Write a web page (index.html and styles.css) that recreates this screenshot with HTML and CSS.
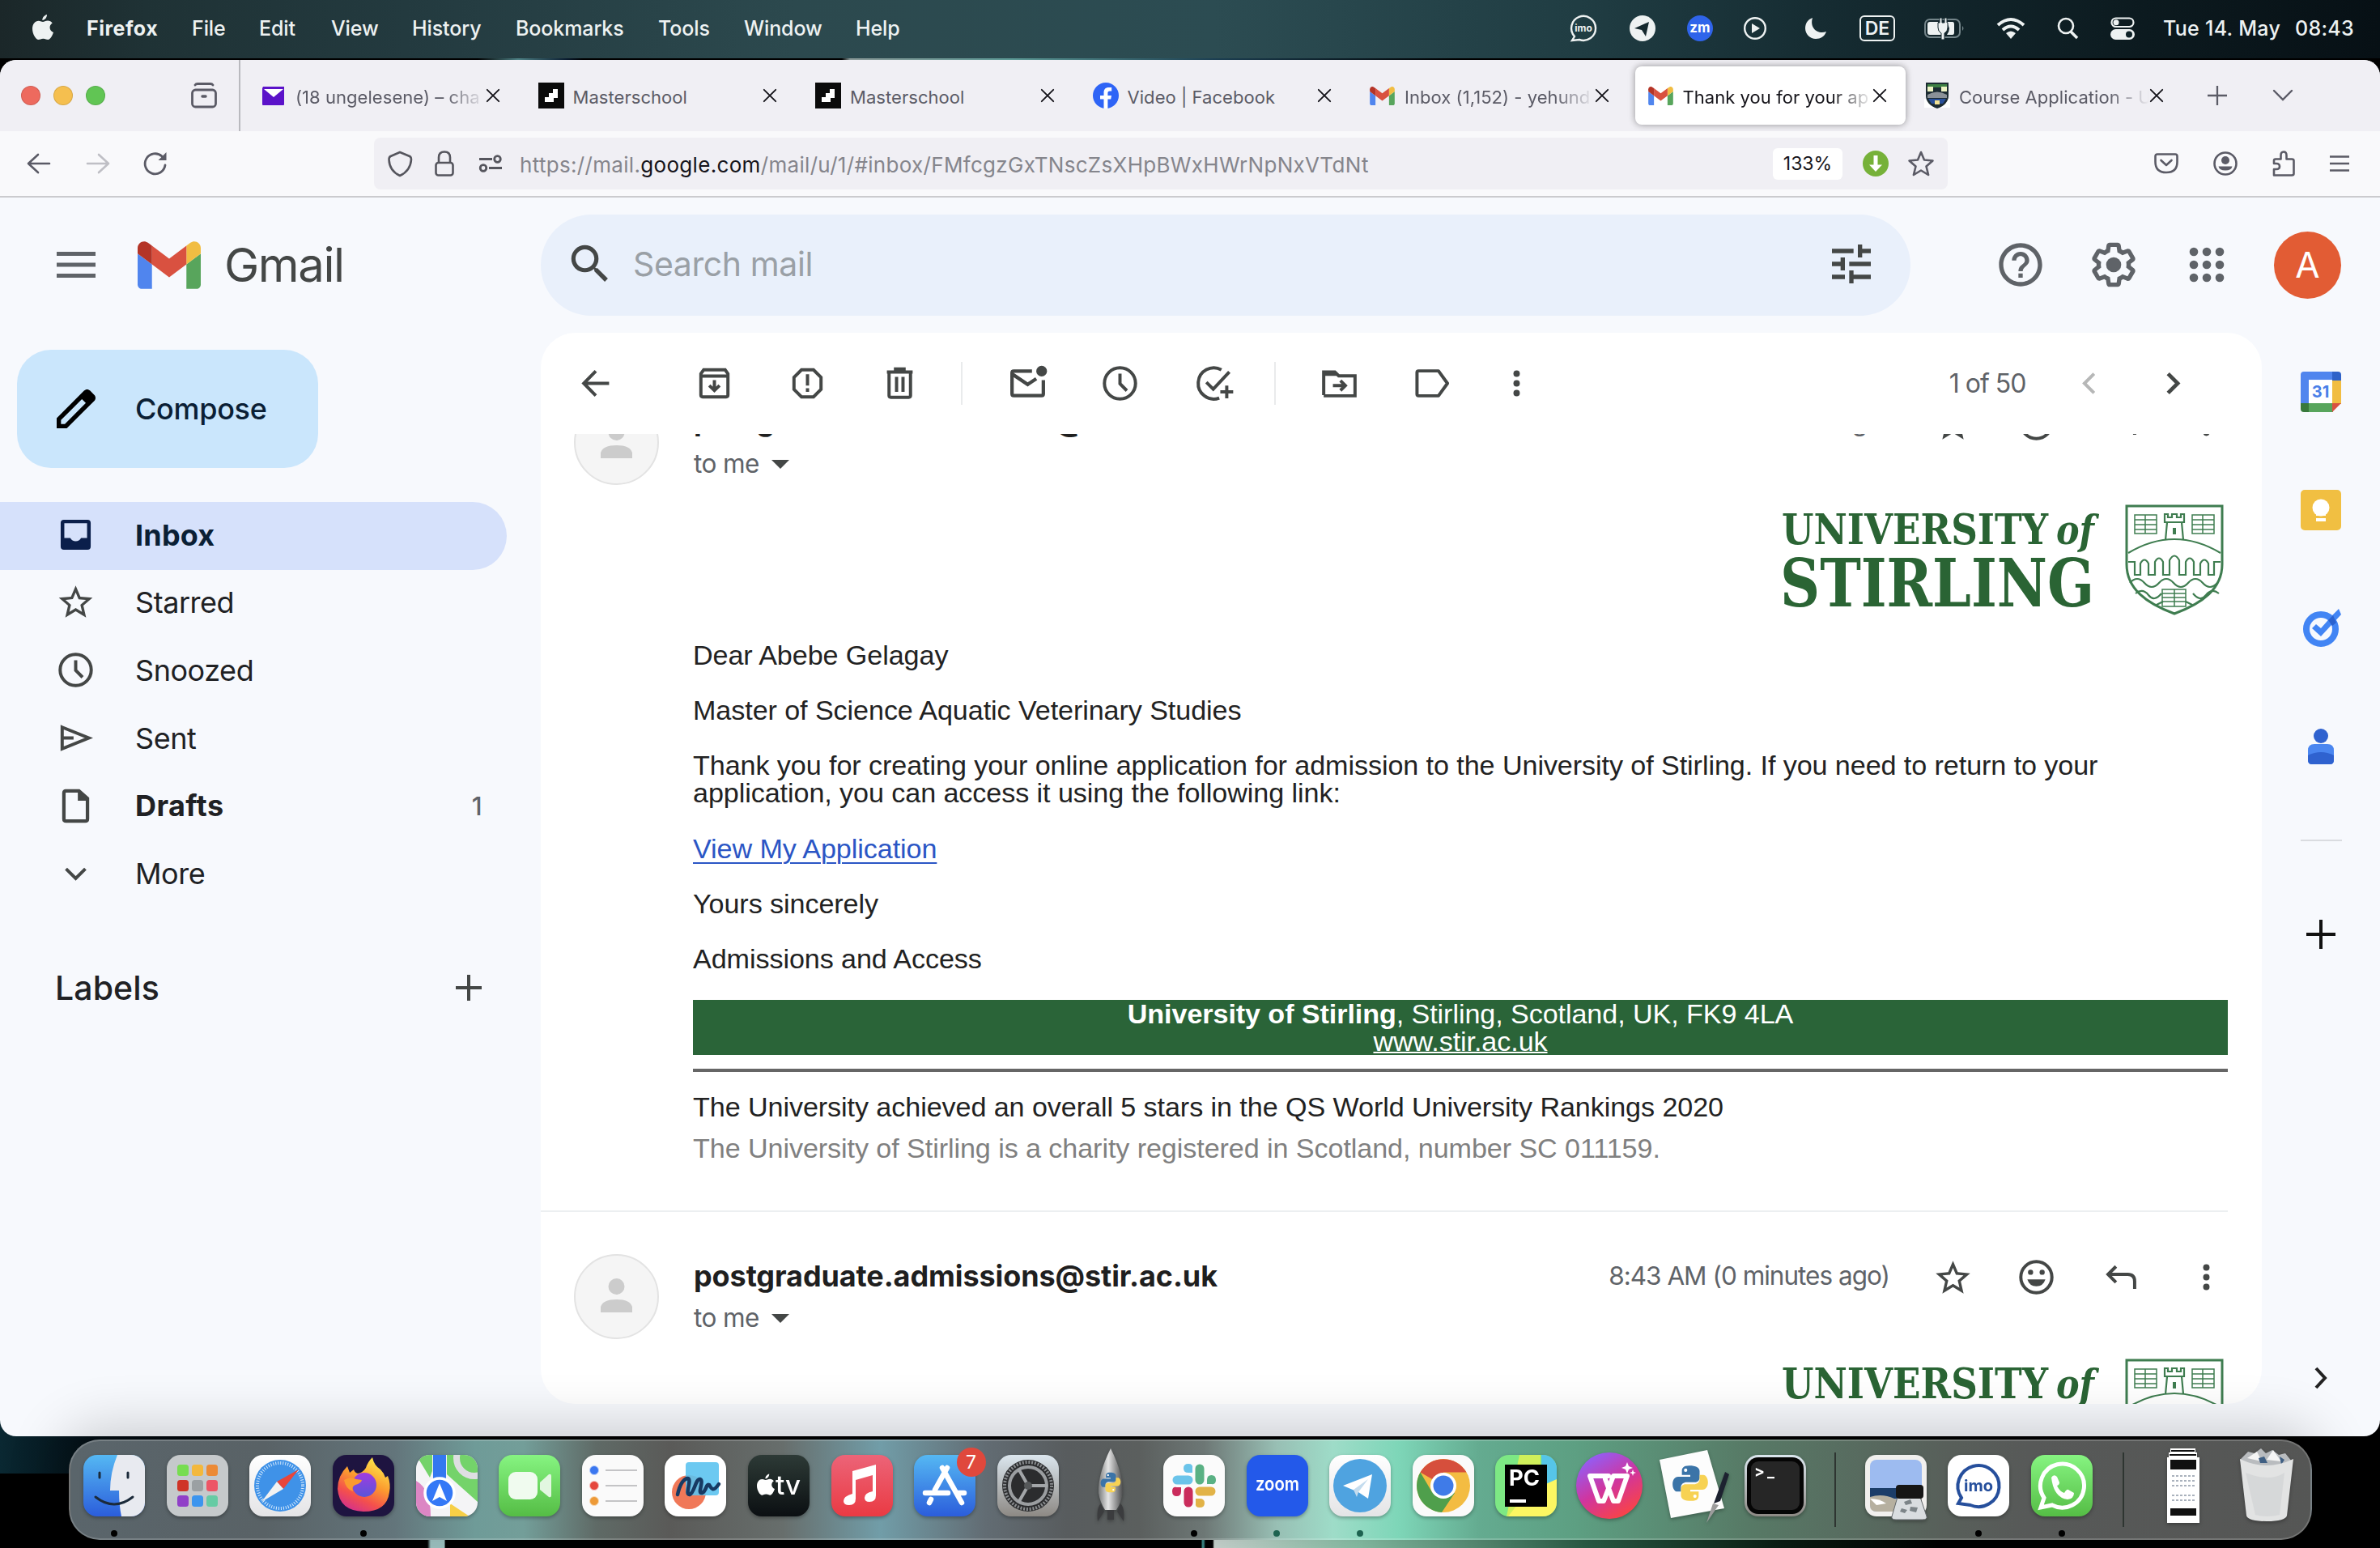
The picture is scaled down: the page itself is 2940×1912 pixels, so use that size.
FILE: index.html
```html
<!DOCTYPE html>
<html lang="en">
<head>
<meta charset="utf-8">
<title>Thank you for your application - Gmail</title>
<link rel="stylesheet" href="styles.css">
</head>
<body>
<svg class="defs" width="0" height="0">
  <defs>
    <symbol id="gmail" viewBox="52 42 88 66"><path fill="#5085ee" d="M58 108h14V74L52 59v43c0 3.32 2.69 6 6 6"/><path fill="#58a55c" d="M120 108h14c3.32 0 6-2.69 6-6V59l-20 15"/><path fill="#f1bd42" d="M120 48v26l20-15v-8c0-7.42-8.47-11.65-14.4-7.2"/><path fill="#d95140" d="M72 74V48l24 18 24-18v26L96 92"/><path fill="#b43427" d="M52 51v8l20 15V48l-5.6-4.2c-5.94-4.45-14.4-.22-14.4 7.2"/></symbol>
    <symbol id="star" viewBox="0 0 24 24"><path fill="currentColor" d="M22 9.24l-7.19-.62L12 2 9.19 8.63 2 9.24l5.46 4.73L5.82 21 12 17.27 18.18 21l-1.63-7.03L22 9.24zM12 15.4l-3.76 2.27 1-4.28-3.32-2.88 4.38-.38L12 6.1l1.71 4.04 4.38.38-3.32 2.88 1 4.28L12 15.4z"/></symbol>
    <symbol id="clock" viewBox="0 0 20 20"><g fill="none" stroke="currentColor" stroke-width="1.5"><circle cx="10" cy="10" r="7.25"/><path d="M10 5.5v4.7l3.2 3.2"/></g></symbol>
    <symbol id="dots" viewBox="0 0 20 20"><g fill="currentColor"><circle cx="10" cy="5.5" r="1.5"/><circle cx="10" cy="10" r="1.5"/><circle cx="10" cy="14.5" r="1.5"/></g></symbol>
    <symbol id="close" viewBox="0 0 20 20"><path fill="none" stroke="#15141a" stroke-width="2.1" stroke-linecap="round" d="M2 2l16 16M18 2L2 18"/></symbol>
    <symbol id="school" viewBox="0 0 32 32"><path fill="#0b0b0b" d="M0 0h32v32H0z"/><path fill="#fff" d="M18 8h6v11h-5v5H8v-6h5v-5h5z"/></symbol>
    <symbol id="apple" viewBox="0 0 26 32"><path fill="currentColor" d="M18 0c.2 3-2.400 7-5.600 7C12 3.800 15 .6 18 0zM13 9c1.600 0 3-1.500 6-1.500 2.300 0 4.400 1.200 5.700 3-4.700 2.700-4 9.600 1.300 11.500-1 3-3.800 9-6.700 9-2.300 0-3-1.300-5.900-1.300S9.600 31 7.600 31C4 31 0 23.500 0 17.500 0 11.500 3.600 7.700 7.600 7.700c2.400 0 4.100 1.300 5.400 1.300z"/></symbol>
    <symbol id="stirling" viewBox="0 0 560 150">
      <g fill="#2a6434">
        <text class="serif" x="1" y="52" font-size="52" textLength="329" lengthAdjust="spacingAndGlyphs">UNIVERSITY</text>
        <text class="serif" x="340" y="52" font-size="50" font-style="italic" textLength="47" lengthAdjust="spacingAndGlyphs">of</text>
        <text class="serif" x="-1" y="129" font-size="82" textLength="388" lengthAdjust="spacingAndGlyphs">STIRLING</text>
      </g>
      <g fill="none" stroke="#3f7d50" stroke-width="2.200">
        <path stroke-width="3" d="M427 5h118v72c0 30-24 48-59 61-35-13-59-31-59-61z"/>
        <path d="M429 63q57-34 114 0M475 47l2-22h-3V15h4v4h5v-4h6v4h5v-4h4v10h-3l2 22M474 25h24"/>
        <path d="M429 74h8v16h7V76q5-9 10 0v14h8V74q5-9 10 0v16h8V72q6-11 12 0v18h8V74q5-9 10 0v16h8V76q5-9 10 0v14h7V74h8"/>
        <path d="M431 100q9-10 18 0t18 0 18 0 18 0 18 0 18 0M438 113q9-7 16 2t16-2M541 113q-9-7-16 2t-16-2M462 128l10-5M510 128l-10-5"/>
        <g stroke-width="1.500"><path d="M437 16h27v23h-27zM450 16v23M437 22h27M437 28h27M437 34h27M508 16h27v23h-27zM521 16v23M508 22h27M508 28h27M508 34h27M471 108h29v21h-29zM486 108v21M471 113h29M471 118h29M471 123h29"/></g>
        <path stroke-width="4" d="M486 32v8"/>
      </g>
    </symbol>
    <symbol id="python" viewBox="0 0 40 40"><path fill="#3b74a8" d="M19 1c-7 0-8 3-8 6v4h9v2H7c-4 0-6 4-6 8s2 8 5 8h4v-5c0-3 3-5 6-5h9c3 0 5-2 5-5V7c0-4-4-6-11-6z"/><path fill="#f7d253" d="M21 39c7 0 8-3 8-6v-4h-9v-2h13c4 0 6-4 6-8s-2-8-5-8h-4v5c0 3-3 5-6 5h-9c-3 0-5 2-5 5v7c0 4 4 6 11 6z"/><circle cx="15" cy="6" r="1.800" fill="#fff"/><circle cx="25" cy="34" r="1.800" fill="#fff"/></symbol>
    <linearGradient id="blueV" x2="0" y2="1"><stop stop-color="#55b8f3"/><stop offset="1" stop-color="#2b5ddb"/></linearGradient>
    <linearGradient id="greenV" x2="0" y2="1"><stop stop-color="#86f481"/><stop offset="1" stop-color="#55bd45"/></linearGradient>
    <linearGradient id="redV" x2="0" y2="1"><stop stop-color="#ec6478"/><stop offset="1" stop-color="#ea3a43"/></linearGradient>
    <linearGradient id="greyV" x2="0" y2="1"><stop stop-color="#dbe6ee"/><stop offset="1" stop-color="#8d8984"/></linearGradient>
    <linearGradient id="darkV" x2="0" y2="1"><stop stop-color="#2d3a36"/><stop offset="1" stop-color="#0b0f12"/></linearGradient>
    <linearGradient id="whiteV" x2="0" y2="1"><stop stop-color="#fff"/><stop offset="1" stop-color="#e4e4e6"/></linearGradient>
    <linearGradient id="fireV" x1=".8" x2=".3" y2="1"><stop stop-color="#fff04d"/><stop offset=".45" stop-color="#fb9a2f"/><stop offset=".75" stop-color="#f4504c"/><stop offset="1" stop-color="#d5318a"/></linearGradient>
    <linearGradient id="violet" x2="0" y2="1"><stop stop-color="#a03be0"/><stop offset="1" stop-color="#5a55d8"/></linearGradient>
    <linearGradient id="wps" x1=".2" x2=".8" y2="1"><stop stop-color="#8b62ff"/><stop offset=".5" stop-color="#d0359f"/><stop offset="1" stop-color="#ff453a"/></linearGradient>
    <linearGradient id="metal"><stop stop-color="#77797a"/><stop offset=".4" stop-color="#e5e5e5"/><stop offset="1" stop-color="#4b4c4d"/></linearGradient>
    <clipPath id="tile"><rect width="76" height="76" rx="17"/></clipPath>
  </defs>
</svg>

<header class="menubar">
  <nav class="menus">
    <svg class="apple" width="26" height="32"><use href="#apple"/></svg>
    <b>Firefox</b><span>File</span><span>Edit</span><span>View</span><span>History</span><span>Bookmarks</span><span>Tools</span><span>Window</span><span>Help</span>
  </nav>
  <div class="status">
    <svg width="34" height="34" viewBox="0 0 34 34"><path d="M6 27a15 15 0 1 1 6 4l-9 1z" fill="none" stroke="currentColor" stroke-width="2.400"/><text x="17" y="21" font-size="12" font-weight="bold" text-anchor="middle" fill="currentColor">imo</text></svg>
    <svg width="32" height="32" viewBox="0 0 32 32"><circle cx="16" cy="16" r="16" fill="currentColor"/><path fill="#15292e" d="M6 16l18-8-4 18-5-8z"/></svg>
    <svg width="32" height="32" viewBox="0 0 32 32"><circle cx="16" cy="16" r="16" fill="#2f64ea"/><text x="16" y="21" font-size="17" font-weight="bold" text-anchor="middle" fill="#fff">zm</text></svg>
    <svg width="30" height="30" viewBox="0 0 30 30"><circle cx="15" cy="15" r="12.800" fill="none" stroke="currentColor" stroke-width="2.400"/><path fill="currentColor" d="M11 9l10 6-10 6z"/></svg>
    <svg width="28" height="28" viewBox="0 0 28 28"><path fill="currentColor" d="M10 1C4 3 1 8 1 14c0 7 6 13 13 13 6 0 11-3 13-9C17 22 6 14 10 1z"/></svg>
    <span class="lang">DE</span>
    <svg width="50" height="28" viewBox="0 0 50 28"><rect x="1" y="3" width="43" height="22" rx="6" fill="none" stroke="#74858a" stroke-width="2"/><path d="M47 11q3 3 0 6z" fill="#74858a"/><path fill="currentColor" d="M7 6h10v7q0 5 4 7v2H7q-3 0-3-3V9q0-3 3-3zM28 6h7q2 0 2 3v10q0 3-2 3h-7q3-4 3-8z"/><path fill="currentColor" stroke="#15292e" d="M19 7V1h3v6h3V1h3v6h1v6q0 5-4 7v8h-4v-8q-4-2-4-7V7z"/></svg>
    <svg width="36" height="28" viewBox="0 0 36 28"><g fill="none" stroke="currentColor" stroke-width="4"><path d="M2 10q16-14 32 0M8 16q10-9 20 0"/></g><path fill="currentColor" d="M12 20q6-5 12 0l-6 7z"/></svg>
    <svg width="28" height="28" viewBox="0 0 28 28"><g fill="none" stroke="currentColor" stroke-width="2.600"><circle cx="12" cy="11" r="9"/><path d="M18 18l8 8" stroke-width="3.500"/></g></svg>
    <svg width="30" height="28" viewBox="0 0 30 28"><rect x="1.500" y="1.500" width="27" height="10.500" rx="5.200" fill="none" stroke="currentColor" stroke-width="2.200"/><circle cx="7" cy="6.800" r="3.500" fill="currentColor"/><rect y="15" width="30" height="13" rx="6.500" fill="currentColor"/><circle cx="23" cy="21.500" r="4" fill="#0f2227"/></svg>
    <span class="date">Tue 14. May</span><span class="time">08:43</span>
  </div>
</header>

<main class="window">
  <div class="tabstrip">
    <div class="lights"><i class="red"></i><i class="amber"></i><i class="green"></i></div>
    <svg class="view" width="32" height="32" viewBox="0 0 32 32"><g fill="none" stroke="#5b5b66" stroke-width="2.800" stroke-linecap="round"><rect x="1.500" y="9" width="29" height="21" rx="4"/><path d="M5 3q1-1.500 3-1.500h16q2 0 3 1.500"/><path d="M14 17h4" stroke-width="3.500"/></g></svg>
    <div class="tabs">
      <div class="tab"><svg width="32" height="32" viewBox="0 0 32 32"><path fill="#5b12c9" d="M3 5h26v22q0 1-1 1H3q-1 0-1-1V7z"/><path fill="#fff" d="M4 8h24L16 18z"/></svg><span class="fade">(18 ungelesene) – cha</span><svg class="x" width="20" height="20"><use href="#close"/></svg></div>
      <div class="tab"><svg width="32" height="32"><use href="#school"/></svg><span>Masterschool</span><svg class="x" width="20" height="20"><use href="#close"/></svg></div>
      <div class="tab"><svg width="32" height="32"><use href="#school"/></svg><span>Masterschool</span><svg class="x" width="20" height="20"><use href="#close"/></svg></div>
      <div class="tab"><svg width="32" height="32" viewBox="0 0 32 32"><circle cx="16" cy="16" r="16" fill="#2e64f6"/><path fill="#fff" d="M13.500 32V20.500H9V16h4.500v-3.500C13.500 8 16 6 19.500 6h3.700v4.500H21c-2 0-2.600 1-2.600 2.500v3H23l-.8 4.500h-3.800V32z"/></svg><span>Video | Facebook</span><svg class="x" width="20" height="20"><use href="#close"/></svg></div>
      <div class="tab"><svg width="31" height="23"><use href="#gmail"/></svg><span class="fade">Inbox (1,152) - yehund</span><svg class="x" width="20" height="20"><use href="#close"/></svg></div>
      <div class="tab active"><svg width="31" height="23"><use href="#gmail"/></svg><span class="fade">Thank you for your ap</span><svg class="x" width="20" height="20"><use href="#close"/></svg></div>
      <div class="tab"><svg width="32" height="32" viewBox="0 0 32 32"><path fill="#fff" d="M0 20h32v11H0z"/><path fill="#1d2c33" d="M2 0h28v16q0 11-14 16Q2 27 2 16z"/><path fill="#3d7f43" d="M4 2h24v4H4z"/><path fill="#eef3c4" d="M4 5h7v6H4zM21 5h7v6h-7z"/><path fill="#8b9198" d="M4 15q12-7 24 0v4H4z"/><path fill="#284f9a" d="M5 20h22l-4 6H9z"/><path fill="#f2e294" d="M13 22h6v5h-6z"/></svg><span class="fade">Course Application - U</span><svg class="x" width="20" height="20"><use href="#close"/></svg></div>
    </div>
    <svg class="newtab" width="26" height="26" viewBox="0 0 26 26"><path stroke="#5b5b66" stroke-width="2.300" d="M13 1v24M1 13h24"/></svg>
    <svg class="alltabs" width="26" height="16" viewBox="0 0 26 16"><path fill="none" stroke="#5b5b66" stroke-width="2.400" stroke-linecap="round" d="M2 2l11 11L24 2"/></svg>
  </div>

  <div class="navbar">
    <svg width="30" height="26" viewBox="0 0 30 26"><path fill="none" stroke="#5b5b66" stroke-width="2.600" stroke-linecap="round" stroke-linejoin="round" d="M14 2L2 13l12 11M2 13h26"/></svg>
    <svg width="30" height="26" viewBox="0 0 30 26"><path fill="none" stroke="#bfbfc5" stroke-width="2.600" stroke-linecap="round" stroke-linejoin="round" d="M16 2l12 11-12 11M28 13H2"/></svg>
    <svg width="30" height="30" viewBox="0 0 30 30"><path fill="none" stroke="#5b5b66" stroke-width="2.800" stroke-linecap="round" d="M27 17a12.500 12.500 0 1 1-4-11l3 3"/><path fill="#5b5b66" d="M28.500 1v10h-10z"/></svg>
    <div class="urlbar">
      <svg width="30" height="32" viewBox="0 0 30 32"><path fill="none" stroke="#55555d" stroke-width="2.600" stroke-linejoin="round" d="M15 2l12 5q2 1 2 4-1 14-14 20Q2 25 1.500 11q0-3 2-4z"/></svg>
      <svg width="24" height="32" viewBox="0 0 24 32"><g fill="none" stroke="#55555d" stroke-width="2.600"><rect x="1.500" y="15" width="21" height="15.500" rx="3"/><path d="M5 15V8.500q0-7 7-7t7 7V15"/></g></svg>
      <svg width="28" height="22" viewBox="0 0 28 22"><g fill="none" stroke="#55555d" stroke-width="2.800"><path d="M0 5.500h16M12 16.500h16"/><circle cx="22.500" cy="5.500" r="3.800"/><circle cx="5" cy="16.500" r="3.800"/></g></svg>
      <span class="url">https://mail.<em>google.com</em>/mail/u/1/#inbox/FMfcgzGxTNscZsXHpBWxHWrNpNxVTdNt</span>
      <span class="zoom">133%</span>
      <svg width="32" height="32" viewBox="0 0 32 32"><circle cx="16" cy="16" r="16" fill="#76b139"/><path fill="#fff" d="M13.500 6h5v11.500H24L16 26l-8-8.500h5.500z"/></svg>
      <svg width="32" height="32" viewBox="0 0 32 32"><path fill="none" stroke="#5b5b66" stroke-width="2.600" stroke-linejoin="round" d="M16 2l4 9.500 10.500 1-8 7 2.600 10.500L16 24.500 6.900 30l2.600-10.500-8-7 10.500-1z"/></svg>
    </div>
    <svg class="pocket" width="30" height="26" viewBox="0 0 30 26"><g fill="none" stroke="#5b5b66" stroke-width="2.600" stroke-linecap="round" stroke-linejoin="round"><path d="M4 1.500h22q2.500 0 2.500 2.500v7q0 13-13.500 13T1.500 11V4Q1.500 1.500 4 1.500z"/><path d="M8.500 9l6.500 6 6.500-6"/></g></svg>
    <svg width="30" height="30" viewBox="0 0 30 30"><circle cx="15" cy="15" r="13.500" fill="none" stroke="#5b5b66" stroke-width="2.600"/><circle cx="15" cy="11" r="5" fill="#5b5b66"/><path fill="#5b5b66" d="M6.500 18.500h17q-1 5-8.500 5t-8.500-5z"/></svg>
    <svg width="28" height="32" viewBox="0 0 28 32"><path fill="none" stroke="#5b5b66" stroke-width="2.600" stroke-linejoin="round" d="M2 30.500V23h3q4 0 4-3.500T5 16H2v-3.500q0-2 2-2h6.500V6q0-4.500 3.500-4.500T17.500 6v4.500H24q2.500 0 2.500 2v16q0 2-2.500 2z"/></svg>
    <svg width="24" height="20" viewBox="0 0 24 20"><path stroke="#5b5b66" stroke-width="2.600" d="M0 1.500h24M0 10h24M0 18.500h24"/></svg>
  </div>

  <div class="gmail">
    <div class="topbar">
      <svg class="burger" width="48" height="32" viewBox="0 0 48 32"><path stroke="#5f6368" stroke-width="5" d="M0 2.500h48M0 16h48M0 29.500h48"/></svg>
      <svg class="mark" width="78" height="59"><use href="#gmail"/></svg>
      <span class="brand">Gmail</span>
      <div class="search">
        <svg width="62" height="62" viewBox="0 0 24 24"><path fill="#444746" d="M15.500 14h-.79l-.28-.27A6.471 6.471 0 0 0 16 9.500 6.500 6.500 0 1 0 9.500 16c1.610 0 3.090-.59 4.230-1.570l.27.28v.79l5 4.990L20.490 19l-4.990-5zm-6 0C7.010 14 5 11.990 5 9.500S7.010 5 9.500 5 14 7.010 14 9.500 11.990 14 9.500 14z"/></svg>
        <span>Search mail</span>
        <svg width="48" height="48" viewBox="0 0 18 18"><path fill="#444746" d="M0 14v2h6v-2H0zM0 2v2h10V2H0zm10 16v-2h8v-2h-8v-2H8v6h2zM4 6v2H0v2h4v2h2V6H4zm14 4V8H8v2h10zm-6-4h2V4h4V2h-4V0h-2v6z"/></svg>
      </div>
      <div class="account">
        <svg width="64" height="64" viewBox="0 0 24 24"><path fill="#5f6368" d="M11 18h2v-2h-2v2zm1-16C6.480 2 2 6.480 2 12s4.480 10 10 10 10-4.480 10-10S17.520 2 12 2zm0 18c-4.410 0-8-3.590-8-8s3.590-8 8-8 8 3.590 8 8-3.590 8-8 8zm0-14c-2.210 0-4 1.790-4 4h2c0-1.100.9-2 2-2s2 .9 2 2c0 2-3 1.750-3 5h2c0-2.250 3-2.500 3-5 0-2.210-1.790-4-4-4z"/></svg>
        <svg width="64" height="64" viewBox="0 0 24 24"><path fill="#5f6368" d="M13.850 22.250h-3.700c-.74 0-1.360-.54-1.450-1.270l-.27-1.890c-.27-.14-.53-.29-.79-.46l-1.800.72c-.7.26-1.470-.03-1.810-.65L2.200 15.530c-.35-.66-.2-1.440.36-1.880l1.530-1.190c-.01-.15-.02-.3-.02-.46 0-.15.010-.31.020-.46l-1.520-1.190c-.59-.45-.74-1.260-.37-1.880l1.850-3.190c.34-.62 1.110-.9 1.790-.63l1.810.73c.26-.17.52-.32.78-.46l.27-1.910c.09-.7.71-1.250 1.440-1.250h3.700c.74 0 1.360.54 1.450 1.270l.27 1.890c.27.14.53.29.79.46l1.800-.72c.71-.26 1.480.03 1.820.65l1.840 3.180c.36.66.2 1.440-.36 1.880l-1.520 1.190c.01.15.02.3.02.46s-.01.31-.02.46l1.520 1.190c.56.45.72 1.230.37 1.860l-1.860 3.220c-.34.62-1.110.9-1.800.63l-1.800-.72c-.26.17-.52.32-.78.46l-.27 1.910c-.1.68-.72 1.220-1.460 1.220zm-3.230-2h2.760l.37-2.550.53-.22c.44-.18.88-.44 1.340-.78l.45-.34 2.380.96 1.380-2.400-2.030-1.580.07-.56c.03-.26.06-.51.06-.78s-.03-.53-.06-.78l-.07-.56 2.030-1.580-1.390-2.400-2.390.96-.45-.35c-.42-.32-.87-.58-1.330-.77l-.52-.22-.37-2.550h-2.760l-.37 2.550-.53.21c-.44.19-.88.44-1.340.79l-.45.33-2.380-.95-1.390 2.390 2.030 1.580-.07.56a7 7 0 0 0-.06.79c0 .26.02.53.06.78l.07.56-2.030 1.580 1.380 2.400 2.390-.96.45.35c.43.33.86.58 1.330.77l.53.22z"/><circle cx="12" cy="12" r="3.500" fill="#5f6368"/></svg>
        <svg width="64" height="64" viewBox="0 0 24 24"><g fill="#5f6368"><circle cx="6" cy="6" r="2"/><circle cx="12" cy="6" r="2"/><circle cx="18" cy="6" r="2"/><circle cx="6" cy="12" r="2"/><circle cx="12" cy="12" r="2"/><circle cx="18" cy="12" r="2"/><circle cx="6" cy="18" r="2"/><circle cx="12" cy="18" r="2"/><circle cx="18" cy="18" r="2"/></g></svg>
        <span class="me">A</span>
      </div>
    </div>

    <div class="columns">
      <aside class="sidebar">
        <button class="compose"><svg width="48" height="48" viewBox="0 0 18 18"><path fill="#000" d="M14.100 0c-.5 0-1 .2-1.400.6L0 13.300V18h4.700L17.400 5.300c.8-.8.8-2 0-2.800L15.500.6c-.4-.4-.9-.6-1.400-.6zM11.700 4.500l1.800 1.800L3.800 16H2v-1.800z"/></svg><span>Compose</span></button>
        <ul class="folders">
          <li class="on"><svg width="53" height="53" viewBox="0 0 20 20"><path fill="#0b1f4b" fill-rule="evenodd" d="M4.500 3h11q1.500 0 1.500 1.500v11q0 1.500-1.500 1.500h-11Q3 17 3 15.500v-11Q3 3 4.500 3zm.2 1.600v6.900h2.800q.8 1.500 2.500 1.500t2.500-1.500h2.800V4.600z"/></svg><span>Inbox</span></li>
          <li><svg width="50" height="50"><use href="#star"/></svg><span>Starred</span></li>
          <li><svg width="53" height="53"><use href="#clock"/></svg><span>Snoozed</span></li>
          <li><svg width="53" height="53" viewBox="0 0 20 20"><path fill="none" stroke="currentColor" stroke-width="1.500" d="M3.700 5l12.400 5-12.400 5zM4 10h5"/></svg><span>Sent</span></li>
          <li class="bold"><svg width="53" height="53" viewBox="0 0 20 20"><path fill="none" stroke="currentColor" stroke-width="1.600" d="M5 3h6.500L15.500 6.500V16q0 1-1 1H5.500q-1 0-1-1V4q0-1 1-1z"/><path fill="currentColor" d="M11 3v4.500h5z"/></svg><span>Drafts</span><small>1</small></li>
          <li><svg width="53" height="53" viewBox="0 0 20 20"><path fill="none" stroke="currentColor" stroke-width="1.500" d="M5.500 8l4.500 4.400L14.500 8"/></svg><span>More</span></li>
        </ul>
        <div class="labels"><span>Labels</span><svg width="32" height="32" viewBox="0 0 32 32"><path stroke="#444746" stroke-width="4" d="M16 0v32M0 16h32"/></svg></div>
      </aside>

      <section class="card">
        <div class="toolbar">
          <svg viewBox="0 0 20 20"><path fill="none" stroke="currentColor" stroke-width="1.500" d="M9.800 4.300L4.200 10l5.600 5.700M4.500 10H16"/></svg>
          <svg viewBox="0 0 20 20"><g fill="none" stroke="currentColor" stroke-width="1.500"><path d="M3.700 6v9.500q0 .8.8.8h11q.8 0 .8-.8V5.500L15 3.700H5L3.700 5.500zM3.700 6.600h12.600M10 8.500V13M7.600 11l2.400 2.300 2.400-2.300"/></g></svg>
          <svg viewBox="0 0 20 20"><path fill="none" stroke="currentColor" stroke-width="1.500" d="M7.200 3.700h5.600l3.500 3.500v5.600l-3.500 3.500H7.200l-3.500-3.500V7.200zM10 5.800v5.200M10 12.300v1.700"/></svg>
          <svg viewBox="0 0 20 20"><g fill="none" stroke="currentColor" stroke-width="1.500"><path d="M5 5v10.700q0 .8.8.8h8.400q.8 0 .8-.8V5M4 4.700h12M8 4V3.300h4V4M8.500 7v7M11.500 7v7"/></g></svg>
          <i></i>
          <svg viewBox="0 0 20 20"><g fill="none" stroke="currentColor" stroke-width="1.600"><path d="M12 4.300H3.500q-.8 0-.8.8v9.800q0 .8.800.8h13q.8 0 .8-.8V8.500M3 5.800l7 4.700 4-2.700"/></g><circle cx="16.500" cy="4.300" r="2.500" fill="currentColor"/></svg>
          <svg><use href="#clock"/></svg>
          <svg viewBox="0 0 20 20"><g fill="none" stroke="currentColor" stroke-width="1.500"><path d="M13.500 3.700A7.250 7.250 0 1 0 12.500 16.800M6.500 9.500l3.200 3.200 7.500-8M16 11v6M13 14h6"/></g></svg>
          <i></i>
          <svg viewBox="0 0 20 20"><path fill="none" stroke="currentColor" stroke-width="1.500" d="M2.700 15.500V4.700h5.200l1.800 1.800h7.600v9.300H2.700M7 11h5.500M10.500 8.700L12.800 11l-2.300 2.300"/><path fill="currentColor" d="M2.700 4.500h5l2 2h-7z"/></svg>
          <svg viewBox="0 0 20 20"><path fill="none" stroke="currentColor" stroke-width="1.500" stroke-linejoin="round" d="M3.500 4.200h9.300l4.200 5.800-4.200 5.800H3.500q-.7 0-.7-.7V4.900q0-.7.7-.7z"/></svg>
          <svg><use href="#dots"/></svg>
          <span class="pos">1 of 50</span>
          <svg class="dim" viewBox="0 0 20 20"><path fill="none" stroke="currentColor" stroke-width="1.500" d="M12 5.500L7.500 10l4.500 4.500"/></svg>
          <svg viewBox="0 0 20 20"><path fill="none" stroke="currentColor" stroke-width="1.800" d="M8 5.500l4.500 4.500L8 14.500"/></svg>
        </div>
        <div class="thread">
          <article class="message first">
            <div class="meta">
              <svg class="avatar" width="105" height="105" viewBox="0 0 105 105"><circle cx="52.500" cy="52.500" r="51.500" fill="#f5f5f5" stroke="#e3e3e3" stroke-width="2"/><circle cx="52.500" cy="40" r="10" fill="#ccc"/><path fill="#ccc" d="M33 72v-7q3-9 19.500-9T72 65v7z"/></svg>
              <div class="who"><b>postgraduate.admissions@stir.ac.uk</b><span>to me <i></i></span></div>
              <span class="when">8:43 AM (0 minutes ago)</span>
              <div class="acts"><svg width="51" height="51"><use href="#star"/></svg><svg width="53" height="53" viewBox="0 0 20 20"><circle cx="10" cy="10" r="7.250" fill="none" stroke="currentColor" stroke-width="1.500"/><circle cx="7.300" cy="7.700" r="1.200" fill="currentColor"/><circle cx="12.700" cy="7.700" r="1.200" fill="currentColor"/><path fill="currentColor" d="M5.800 11h8.400q-1 3.200-4.200 3.200T5.800 11z"/></svg><svg width="53" height="53" viewBox="0 0 20 20"><path fill="none" stroke="currentColor" stroke-width="1.500" d="M7.500 5L3.800 8.700l3.700 3.700M4 8.700h9q3.200 0 3.200 3.300v3.500"/></svg><svg width="53" height="53"><use href="#dots"/></svg></div>
            </div>
            <svg class="logo" width="560" height="150"><use href="#stirling"/></svg>
            <div class="body">
              <p>Dear Abebe Gelagay</p>
              <p>Master of Science Aquatic Veterinary Studies</p>
              <p>Thank you for creating your online application for admission to the University of Stirling. If you need to return to your<br>application, you can access it using the following link:</p>
              <p><a>View My Application</a></p>
              <p>Yours sincerely</p>
              <p>Admissions and Access</p>
              <div class="banner"><b>University of Stirling</b>, Stirling, Scotland, UK, FK9 4LA<br><u>www.stir.ac.uk</u></div>
              <div class="rule"></div>
              <p class="rank">The University achieved an overall 5 stars in the QS World University Rankings 2020</p>
              <p class="charity">The University of Stirling is a charity registered in Scotland, number SC 011159.</p>
            </div>
          </article>
          <article class="message">
            <div class="meta">
              <svg class="avatar" width="105" height="105" viewBox="0 0 105 105"><circle cx="52.500" cy="52.500" r="51.500" fill="#f5f5f5" stroke="#e3e3e3" stroke-width="2"/><circle cx="52.500" cy="40" r="10" fill="#ccc"/><path fill="#ccc" d="M33 72v-7q3-9 19.500-9T72 65v7z"/></svg>
              <div class="who"><b>postgraduate.admissions@stir.ac.uk</b><span>to me <i></i></span></div>
              <span class="when">8:43 AM (0 minutes ago)</span>
              <div class="acts"><svg width="51" height="51"><use href="#star"/></svg><svg width="53" height="53" viewBox="0 0 20 20"><circle cx="10" cy="10" r="7.250" fill="none" stroke="currentColor" stroke-width="1.500"/><circle cx="7.300" cy="7.700" r="1.200" fill="currentColor"/><circle cx="12.700" cy="7.700" r="1.200" fill="currentColor"/><path fill="currentColor" d="M5.800 11h8.400q-1 3.200-4.200 3.200T5.800 11z"/></svg><svg width="53" height="53" viewBox="0 0 20 20"><path fill="none" stroke="currentColor" stroke-width="1.500" d="M7.500 5L3.800 8.700l3.700 3.700M4 8.700h9q3.200 0 3.200 3.300v3.500"/></svg><svg width="53" height="53"><use href="#dots"/></svg></div>
            </div>
            <svg class="logo" width="560" height="150"><use href="#stirling"/></svg>
          </article>
        </div>
      </section>

      <aside class="apps">
        <svg width="50" height="50" viewBox="0 0 50 50"><path fill="#5085ee" d="M4 0h36v10H10v30H0V4q0-4 4-4z"/><path fill="#2f62c8" d="M39 0h7q4 0 4 4v7H39z"/><path fill="#f1bd42" d="M39 11h11v29H39z"/><path fill="#58a55c" d="M10 39h30v11H10z"/><path fill="#38793c" d="M0 39h10v11H4q-4 0-4-4z"/><path fill="#d95140" d="M39 39h11L39 50z"/><path fill="#fff" d="M10 11h29v28H10z"/><text x="24.500" y="32" font-size="20" font-weight="bold" text-anchor="middle" fill="#4a7fe8">31</text></svg>
        <svg width="50" height="50" viewBox="0 0 50 50"><rect width="50" height="50" rx="5" fill="#f1bf42"/><circle cx="25" cy="22" r="10.500" fill="#fff"/><path fill="#fff" d="M19 29h12v3H19zM19 35h12v4H19z"/></svg>
        <svg width="50" height="50" viewBox="0 0 50 50"><circle cx="25" cy="26" r="18" fill="none" stroke="#4285f4" stroke-width="8"/><path fill="#4285f4" d="M14 25l5-5 6 5L40 8l7-7 3 7-25 27z"/><path fill="#2a62cf" d="M34 15l6-6 4 9-5 4z"/></svg>
        <svg width="50" height="50" viewBox="0 0 50 50"><circle cx="25" cy="12" r="9" fill="#2f62cf"/><path fill="#4a86f0" d="M9 30q0-8 8-8h16q8 0 8 8v12q0 5-5 5H14q-5 0-5-5z"/><path fill="#2f62cf" d="M9 36q16-8 32 0v6q0 5-5 5H14q-5 0-5-5z"/></svg>
        <hr>
        <svg class="add" width="36" height="36" viewBox="0 0 36 36"><path stroke="#111" stroke-width="4" d="M18 0v36M0 18h36"/></svg>
        <svg class="hide" width="18" height="28" viewBox="0 0 18 28"><path fill="none" stroke="#222" stroke-width="4" d="M3 2l11 12L3 26"/></svg>
      </aside>
    </div>
  </div>
</main>

<footer class="dock">
  <div class="app run"><svg viewBox="0 0 76 76"><g clip-path="url(#tile)"><path fill="url(#blueV)" d="M0 0h76v76H0z"/><path fill="#e8eaf0" d="M42 0q-9 22-9 44h11q0 18 3 32h29V0z"/></g><path fill="none" stroke="#1b2a3a" stroke-width="3" stroke-linecap="round" d="M15 52q23 18 46 0M20 22v6M55 22v6"/></svg></div>
  <div class="app"><svg viewBox="0 0 76 76"><rect width="76" height="76" rx="17" fill="#c5c9cb"/><rect x="13" y="12" width="14" height="14" rx="3.500" fill="#77dd50"/><rect x="31" y="12" width="14" height="14" rx="3.500" fill="#f3b83c"/><rect x="49" y="12" width="14" height="14" rx="3.500" fill="#ec8a35"/><rect x="13" y="31" width="14" height="14" rx="3.500" fill="#cf3427"/><rect x="31" y="31" width="14" height="14" rx="3.500" fill="#9ba0a3"/><rect x="49" y="31" width="14" height="14" rx="3.500" fill="#ed5566"/><rect x="13" y="50" width="14" height="14" rx="3.500" fill="#9040c8"/><rect x="31" y="50" width="14" height="14" rx="3.500" fill="#3c95ee"/><rect x="49" y="50" width="14" height="14" rx="3.500" fill="#66cba4"/></svg></div>
  <div class="app"><svg viewBox="0 0 76 76"><rect width="76" height="76" rx="17" fill="url(#whiteV)"/><circle cx="38" cy="38" r="32" fill="#3f92e8"/><circle cx="38" cy="38" r="28" fill="none" stroke="#d7eafc" stroke-width="4" stroke-dasharray="1 2"/><path fill="#e8453a" d="M61 18L34 33l8 9z"/><path fill="#f2f2f2" d="M15 58l19-25 8 9z"/></svg></div>
  <div class="app run"><svg viewBox="0 0 76 76"><rect width="76" height="76" rx="17" fill="#1e1440"/><path fill="url(#fireV)" d="M6 42q0-16 12-28l3 8 5-4q1 4 5 5 6-1 10-7 2-7 8-13 2 10 10 15 4 4 6 10l3-2q4 10 2 20-3 24-32 24Q8 69 6 42z"/><circle cx="39" cy="37" r="15" fill="url(#violet)"/><path fill="#fb9a2f" d="M14 31q8-5 15-1l7 1q-1 4-8 6-5 2-3 8-9-3-11-14z"/></svg></div>
  <div class="app"><svg viewBox="0 0 76 76"><g clip-path="url(#tile)"><path fill="#f4f4f6" d="M0 0h76v76H0z"/><path fill="#74d36a" d="M0 0h20v20l-3 8zM38 0h38v58L38 24z"/><path fill="#dc86c4" d="M0 32q18 10 18 44H0z"/><path fill="#f7cf46" d="M42 60l24 16H42z"/><path fill="#3478f0" d="M21 0h16v34H21z"/><circle cx="72" cy="4" r="22" fill="none" stroke="#dedee2" stroke-width="8"/></g><circle cx="29" cy="47" r="18" fill="#3478f6" stroke="#fff" stroke-width="3.500"/><path fill="#fff" d="M29 35l9 22-9-5-9 5z"/></svg></div>
  <div class="app"><svg viewBox="0 0 76 76"><rect width="76" height="76" rx="17" fill="url(#greenV)"/><rect x="12" y="21" width="36" height="34" rx="9" fill="#f0fbef"/><path fill="#e2f7e0" d="M51 34l11-10q3-1 3 2v24q0 3-3 2L51 43z"/></svg></div>
  <div class="app"><svg viewBox="0 0 76 76"><rect width="76" height="76" rx="17" fill="#fafafa"/><path stroke="#c4c4c6" stroke-width="2" d="M29 19h39M29 38h39M29 57h39"/><circle cx="15" cy="19" r="5.500" fill="#3b77f0" stroke="#bfd3fa"/><circle cx="15" cy="38" r="5.500" fill="#e5463c" stroke="#f7c3bf"/><circle cx="15" cy="57" r="5.500" fill="#ed9a38" stroke="#f9dcb8"/></svg></div>
  <div class="app"><svg viewBox="0 0 76 76"><rect width="76" height="76" rx="17" fill="#fff"/><circle cx="30" cy="46" r="21" fill="#f07858"/><rect x="26" y="9" width="41" height="41" rx="4" fill="#5cc3f0" opacity=".9"/><path fill="none" stroke="#173a63" stroke-width="4.500" stroke-linecap="round" stroke-linejoin="round" d="M16 49Q20 31 28 29C35 29 24 50 31 49C37 47 38 29 44 30C49 32 40 48 46 47C52 45 51 35 55 37C58 42 60 46 67 36"/></svg></div>
  <div class="app"><svg viewBox="0 0 76 76"><rect width="76" height="76" rx="17" fill="url(#darkV)"/><svg x="11" y="23" width="22" height="28" color="#fff"><use href="#apple"/></svg><text x="34" y="49" font-size="32" font-weight="500" fill="#fff" textLength="31" lengthAdjust="spacingAndGlyphs">tv</text></svg></div>
  <div class="app"><svg viewBox="0 0 76 76"><rect width="76" height="76" rx="17" fill="url(#redV)"/><path fill="#fff" d="M26 20l29-8v38q0 8-8 8-6 0-6-5 0-6 10-8V25l-21 6v23q0 8-8 8-7 0-7-5 0-6 11-9z"/></svg></div>
  <div class="app"><svg viewBox="0 0 76 76"><rect width="76" height="76" rx="17" fill="url(#blueV)"/><g stroke="#fff" stroke-width="6.500" stroke-linecap="round"><path d="M35 16l24 43M41 16L26 43M14 47h28M54 47h8M21 55l-2 4"/></g></svg><span class="badge">7</span></div>
  <div class="app"><svg viewBox="0 0 76 76"><rect width="76" height="76" rx="17" fill="url(#greyV)"/><circle cx="38" cy="38" r="32" fill="#2b2c2e"/><circle cx="38" cy="38" r="29" fill="none" stroke="#8a8d90" stroke-width="4" stroke-dasharray="2 1.800"/><circle cx="38" cy="38" r="23" fill="none" stroke="#9a9da0" stroke-width="4"/><path fill="none" stroke="#a2a5a8" stroke-width="4" d="M38 38h24M38 38L26 17M38 38L26 59"/><circle cx="38" cy="38" r="5" fill="#55585a"/></svg></div>
  <div class="app"><svg class="tall" viewBox="0 0 76 92"><path fill="#3b3c3e" d="M26 68q-6 5-4 22l8-12zM50 68q6 5 4 22l-8-12zM34 74h8v14h-8z"/><path fill="url(#metal)" d="M38 0q16 32 15 55-2 12-8 21H31q-6-9-8-21Q22 32 38 0z"/><svg x="25" y="26" width="26" height="32"><use href="#python"/></svg></svg></div>
  <div class="app run"><svg viewBox="0 0 76 76"><rect width="76" height="76" rx="17" fill="#fbfbfb"/><g stroke-width="11" stroke-linecap="round"><path stroke="#6bc4ea" d="M17 31h14"/><path stroke="#5ab184" d="M45 17v14"/><path stroke="#ca2c5c" d="M31 45v14"/><path stroke="#e2b347" d="M45 45h14"/></g><path fill="#6bc4ea" d="M36 22h-5q-6 0-6-5.500T31 11t5 5.500z"/><path fill="#5ab184" d="M54 36v-5q0-6 5.500-6t5.500 6-5.500 5z"/><path fill="#ca2c5c" d="M22 40v5q0 6-5.500 6T11 45t5.500-5z"/><path fill="#e2b347" d="M40 54h5q6 0 6 5.500T45 65t-5-5.500z"/></svg></div>
  <div class="app run mint"><svg viewBox="0 0 76 76"><rect width="76" height="76" rx="17" fill="#2359ea"/><text x="38" y="44" font-size="23" font-weight="600" fill="#fff" text-anchor="middle" textLength="54" lengthAdjust="spacingAndGlyphs">zoom</text></svg></div>
  <div class="app run mint"><svg viewBox="0 0 76 76"><rect width="76" height="76" rx="17" fill="url(#whiteV)"/><circle cx="38" cy="38" r="33" fill="#4fa3e0"/><path fill="#fff" d="M17 38l36-14-5 30-12-8z"/><path fill="#c4dcee" d="M30 43l18-13-12 16-2 6z"/></svg></div>
  <div class="app"><svg viewBox="0 0 76 76"><rect width="76" height="76" rx="17" fill="#fafafa"/><circle cx="38" cy="38" r="33" fill="#f3bc42"/><path fill="#d64f3c" d="M38 38L9.500 21.500A33 33 0 0 1 66.500 21.500H38z"/><path fill="#4f9f4c" d="M38 38l14 9-16 24A33 33 0 0 1 9.500 21.500L24 46z"/><circle cx="38" cy="38" r="16" fill="#fff"/><circle cx="38" cy="38" r="12.500" fill="#3f7be8"/></svg></div>
  <div class="app"><svg viewBox="0 0 76 76"><g clip-path="url(#tile)"><path fill="#7de884" d="M0 0h76v76H0z"/><path fill="#d0f05a" d="M30 0h26v76H14z"/><path fill="#fbf662" d="M52 30l24-4v50H16z"/><path fill="#56c5e8" d="M57 0h19v30l-18 8z"/></g><path d="M12 12h52v52H12z"/><path fill="#fff" d="M18 55h20v4H18z"/><text x="17" y="38" font-size="27" font-weight="bold" fill="#fff" textLength="38" lengthAdjust="spacingAndGlyphs">PC</text></svg></div>
  <div class="app"><svg class="big" viewBox="0 0 82 82"><circle cx="41" cy="41" r="41" fill="url(#wps)"/><path fill="none" stroke="#fff" stroke-width="6" stroke-linejoin="round" stroke-linecap="round" d="M40 29H17l11 31h6L46 29h17L52 60h-6L36 33"/><path fill="#fff" d="M63 12l2 5 5 2-5 2-2 5-2-5-5-2 5-2zM70 21l1 3 3 1-3 1-1 3-1-3-3-1 3-1z"/></svg></div>
  <div class="app"><svg class="tall" viewBox="0 0 76 92"><path fill="#fdfdfd" d="M-3 14L56 2l21 72L11 86z"/><svg x="10" y="20" width="50" height="46"><use href="#python"/></svg><path fill="#1d2230" d="M78 29l5 3-11 33-8 3z"/><path fill="#9c9c9c" d="M63 68l7 2-15 22z"/></svg></div>
  <div class="app"><svg viewBox="0 0 76 76"><rect width="76" height="76" rx="17" fill="url(#greyV)"/><rect x="3" y="3" width="70" height="70" rx="14" fill="#050505"/><rect x="8" y="8" width="60" height="60" rx="9" fill="#262626"/><text x="12" y="27" font-size="19" font-weight="bold" fill="#fff" textLength="25">&gt;_</text></svg></div>
  <i class="sep"></i>
  <div class="app"><svg viewBox="0 0 76 76"><rect width="76" height="76" rx="14" fill="#f1f0ee"/><rect x="6" y="6" width="64" height="64" rx="8" fill="#9dbbf0"/><path fill="#1b3d69" d="M6 41h64v13H6z"/><path fill="#b6b0a0" d="M6 52q15-5 30 2t34-2v10q0 8-8 8H14q-8 0-8-8z"/><path fill="#fff" d="M6 54q12 0 20 6l-12 2z"/><path fill="#d9dde0" stroke="#62676a" d="M40 52h28l8 24q1 4-5 4H38q-6 0-5-4z"/><rect x="38" y="37" width="34" height="17" rx="4" fill="#161616"/><path fill="#7c8488" d="M48 58l8-3 2 5-8 2zM56 64l9 1-2 6-8-2zM45 66l7 2-3 4-6-2z"/></svg></div>
  <div class="app run"><svg viewBox="0 0 76 76"><rect width="76" height="76" rx="17" fill="#fff"/><path fill="none" stroke="#264f9c" stroke-width="4" d="M17 53A25.500 25.500 0 1 1 28 62l-15-2z"/><text x="38" y="45" font-size="20" font-weight="bold" fill="#264f9c" text-anchor="middle" textLength="36" lengthAdjust="spacingAndGlyphs">imo</text></svg></div>
  <div class="app run"><svg viewBox="0 0 76 76"><rect width="76" height="76" rx="17" fill="url(#greenV)"/><path fill="none" stroke="#fff" stroke-width="5" d="M16 53a27 27 0 1 1 10 9l-14 3z"/><path fill="#fff" d="M25 28q3-5 7-1l3 7q0 3-3 4 3 7 9 9 3-5 5-4l7 4q0 7-8 8Q28 53 25 28z"/></svg></div>
  <i class="sep"></i>
  <div class="app"><svg class="tall" viewBox="0 0 76 92"><path fill="#fff" d="M22 0h31v5H22zM20 5h35v6H20zM18 11h40v81H18z"/><path fill="#111" d="M23 2h29v2H23zM21 7h33v2H21zM22 14h32v12H22zM22 74h32v9H22z"/><path stroke="#aab2bd" stroke-width="2" stroke-dasharray="3 2" d="M24 34h28M24 40h28M24 46h28M24 58h28M24 64h28"/></svg></div>
  <div class="app"><svg class="tall" viewBox="0 0 76 92"><path fill="#b9bcbf" d="M5 14l10-10 8 2 8-6 6 6 8-4 8 6 8-2 8 10-6 10H10z"/><path fill="#f5f5f5" d="M14 12l12-8 6 12zM38 14l8-12 10 14z"/><path fill="#3f5f83" d="M28 12l7-2 4 8h-9zM54 10l6 4-4 6z"/><path fill="#e2e3e3" d="M5 13q33 16 66 0l-8 70q-2 7-25 7t-25-7z"/><path fill="#cfd1d2" d="M12 30q30 12 48 0l-6 52q-16 4-30 0z" opacity=".6"/></svg></div>
</footer>
</body>
</html>
```
FILE: styles.css
```css
* { box-sizing: border-box; }
html { height: 1912px; overflow: hidden; background: #000; }
body {
  margin: 0; width: 2940px; height: 1912px; overflow: hidden;
  font-family: Inter, "Liberation Sans", sans-serif; color: #202124;
  background:
    linear-gradient(90deg, transparent 528px, #a5cccb 532px 549px, transparent 550px 1484px, #3b8a88 1485px 1487px, #000 1489px 1498px, #d3dfda 1500px, #8dc8ad 1680px, #2c6149 1960px, #0a1f14 2200px, #000 2400px) 0 1888px / 100% 24px no-repeat,
    linear-gradient(90deg, #0a2832, #030d13 120px, #000 400px) 0 1700px / 100% 120px no-repeat,
    linear-gradient(90deg, #000 590px, #4e8286 640px, #0a1c30 700px, #000 720px 1040px, #8b9a98 1050px, #5d9a96 1250px, #1c3f52 1500px, #000 1800px) 0 72px / 100% 2px no-repeat,
    #000;
}
svg { display: block; flex: none; overflow: visible; }
.defs { position: absolute; }
svg text { font-family: Inter, sans-serif; }
svg text.serif { font-family: "DejaVu Serif Condensed", "DejaVu Serif", serif; font-weight: bold; }

/* menu bar */
.menubar {
  height: 72px; display: flex; justify-content: space-between; align-items: center;
  background: linear-gradient(90deg, #1b2729 0, #1f3235 180px, #233a3f 500px, #2c494e 980px, #2c4c52 1500px, #203d43 1950px, #14292f 2300px, #0c1a1f 2650px, #071015 2940px);
  color: #eef2f2; font-size: 25px; line-height: 70px; font-weight: 500;
}
.menus { display: grid; grid-template-columns: 67px 130px 83px 89px 100px 128px 176px 106px 138px 90px; align-items: center; margin-left: 40px; letter-spacing: -.1px; padding-bottom: 2px; }
.menus b { font-weight: 700; letter-spacing: .5px; }
.apple { margin-top: -3px; }
.status { display: grid; grid-template-columns: 73px 73px 68px 68px 82px 71px 94px 71px 69px 67px 162px 71px; justify-items: center; align-items: center; width: 986px; margin-right: 34px; padding-bottom: 2px; }
.status > * { margin-left: -1px; }
.lang { width: 44px; height: 32px; border: 2.500px solid currentColor; border-radius: 6px; line-height: 28px; text-align: center; font-size: 23px; font-weight: 600; }
.date, .time { white-space: nowrap; letter-spacing: .3px; justify-self: start; }
.status .date { margin-left: 16px; }
.status .time { margin-left: 17px; }

/* browser window */
.window { margin-top: 2px; height: 1700px; border-radius: 20px; overflow: hidden; background: #f7f9fd; display: flex; flex-direction: column; }
.tabstrip { height: 88px; background: #f0eff4; display: flex; align-items: center; flex: none; }
.lights { display: flex; gap: 16px; margin-left: 26px; }
.lights i { width: 24px; height: 24px; border-radius: 50%; border: 1px solid rgba(0,0,0,.12); }
.red { background: #ed6a5e; } .amber { background: #f5bf4f; } .green { background: #61c554; }
.view { margin: 0 27px 0 106px; }
.tabs { display: flex; height: 88px; align-items: center; border-left: 2px solid #b9b9be; padding-left: 6px; }
.tab { width: 342.500px; height: 72px; display: flex; align-items: center; padding-left: 19px; font-size: 22px; color: #5b5b66; white-space: nowrap; }
.tab span { flex: 1; margin-left: 11px; overflow: hidden; letter-spacing: .05px; line-height: 72px; padding-top: 4px; }
.tab .x { margin-right: 28px; width: 18px; height: 18px; }
.tab.active .x { margin-right: 23px; }
.fade { -webkit-mask-image: linear-gradient(90deg, #000 calc(100% - 50px), transparent); mask-image: linear-gradient(90deg, #000 calc(100% - 50px), transparent); }
.active { width: 334px; margin: 0 4.500px 0 4px; background: #fff; border-radius: 8px; box-shadow: 0 0 8px rgba(0,0,0,.4); color: #15141a; }
.tab.active { padding-left: 16px; width: 334px; }
.tab.active span, .tab:nth-child(5) span { margin-left: 12px; }
.newtab { margin-left: 25px; }
.alltabs { margin-left: 55px; }
.navbar { height: 82px; flex: none; background: #f9f9fb; border-bottom: 2px solid #cbcbce; display: flex; align-items: center; padding-left: 33px; }
.navbar > svg + svg { margin-left: 43px; }
.navbar > svg:nth-child(3) { margin-left: 41px; }
.urlbar { width: 1944px; height: 64px; margin: 0 255px 0 255px; border-radius: 8px; background: #f0eff4; display: flex; align-items: center; padding: 0 17px; }
.urlbar svg:nth-of-type(2) { margin-left: 28px; }
.urlbar svg:nth-of-type(3) { margin-left: 31px; }
.urlbar svg:nth-of-type(5) { margin-left: 24px; }
.url { font-size: 26px; color: #85858c; margin-left: 22px; letter-spacing: .32px; flex: 1; padding-top: 2px; }
.url em { font-style: normal; color: #15141a; }
.zoom { width: 86px; height: 39px; line-height: 39px; background: #fff; border-radius: 6px; text-align: center; font-size: 23px; color: #15141a; margin-right: 25px; }

/* mail shell */
.gmail { flex: 1; display: flex; flex-direction: column; min-height: 0; }
.topbar { height: 167px; display: flex; align-items: center; flex: none; padding-bottom: 1px; }
.burger { margin-left: 70px; }
.mark { margin-left: 52px; }
.brand { width: 391px; margin-left: 29px; font-size: 58px; color: #444746; letter-spacing: -1.400px; }
.search { width: 1692px; height: 125px; border-radius: 62.500px; background: #e9f0fb; display: flex; align-items: center; padding: 0 49px 2px 30px; font-size: 41px; color: #9aa0a6; letter-spacing: -.4px; }
.search span { flex: 1; margin-left: 22px; }
.account { display: flex; align-items: center; gap: 51px; margin-left: 104px; }
.me { width: 83px; height: 83px; line-height: 83px; border-radius: 50%; background: #e25c34; color: #fff; text-align: center; font-size: 44px; }
.columns { flex: 1; display: flex; min-height: 0; }
.sidebar { width: 668px; }
.compose { display: flex; align-items: center; width: 372px; height: 146px; margin: 21px 0 0 21px; padding: 0 0 1px 49px; border: 0; border-radius: 42px; background: #cae6fc; font: 500 36px Inter, sans-serif; color: #0b1f35; letter-spacing: -.3px; }
.compose span { margin-left: 49px; }
.folders { list-style: none; margin: 42px 0 0; padding: 0; font-size: 36px; letter-spacing: -.45px; }
.folders li { height: 83.600px; width: 626px; padding: 0 0 2px 67px; display: flex; align-items: center; color: #444746; }
.folders li > svg { width: 53px; }
.folders span { margin-left: 47px; color: #202124; flex: 1; }
.folders .on { background: #d6e1fb; border-radius: 0 42px 42px 0; font-weight: 700; letter-spacing: .2px; }
.folders .on span { color: #0b1f35; }
.folders .bold { font-weight: 700; letter-spacing: .4px; }
.folders small { font-size: 31px; font-weight: 500; margin-right: 30px; color: #5f6368; }
.labels { display: flex; align-items: center; justify-content: space-between; width: 595px; padding-left: 68px; margin-top: 71px; font-size: 41px; font-weight: 500; line-height: 54px; letter-spacing: .1px; }

/* reading pane */
.card { width: 2126px; height: 1323px; background: #fff; border-radius: 43px; overflow: hidden; color: #444746; }
.toolbar { height: 125px; display: grid; align-items: center; justify-items: start; padding-left: 41.500px; grid-template-columns: 146px 115px 114px 102.500px 55.500px 114px 116px 101px 54px 115px 104px 150px 558px 102px 86px; }
.toolbar svg { width: 53px; height: 53px; }
.toolbar > i { width: 2px; height: 53px; background: #e9ebec; }
.pos { font-size: 32px; color: #5f6368; justify-self: end; margin-right: 52px; letter-spacing: -1px; white-space: nowrap; }
.dim { color: #b6b7b7; }
.thread { height: 1198px; overflow: hidden; }
.message { padding: 0 42px 0 41px; height: 1057px; }
.first { margin-top: -96px; border-bottom: 2px solid #eceff1; margin-right: 42px; padding-right: 0; }
.meta { display: flex; height: 157px; padding-top: 52px; }
.first .meta { padding-top: 54px; height: 159px; }
.who { margin: 6px auto 0 43px; display: flex; flex-direction: column; font-size: 31.500px; color: #5f6368; }
.who b { font-size: 36px; line-height: 42px; color: #1f1f1f; font-weight: 700; letter-spacing: -.1px; }
.first .who b { margin: -2px 0 2px; }
.who span { line-height: 40px; margin-top: 11px; display: flex; align-items: center; letter-spacing: -.6px; }
.who i { border: 11px solid transparent; border-top-color: #444746; border-bottom: 0; margin-left: 15px; }
.when { font-size: 31.500px; color: #5f6368; line-height: 42px; margin-top: 6px; letter-spacing: -1px; }
.acts { display: grid; grid-template-columns: 105px 105px 105px 53px; height: 53px; justify-items: start; align-items: center; margin: 1px 0 0 50px; width: 368px; flex: none; }
.acts svg:first-child { margin: 3px 0 0 3px; }
.logo { margin: 21px 0 0 auto; transform: translateX(8px); }
.body { margin-left: 147px; padding-top: 22px; font: 34.130px/34.130px "Liberation Sans", Arial, sans-serif; letter-spacing: -.08px; color: #222; }
.body p { margin: 0 0 34px; white-space: nowrap; }
.body a { color: #2b56c5; text-decoration: underline; text-decoration-thickness: 2px; text-underline-offset: 5px; }
.banner { height: 68px; background: #2a6438; color: #fff; text-align: center; }
.banner u { text-decoration-thickness: 2px; }
.rule { height: 4px; background: #666; margin: 17px 0 26px; }
.body .rank { margin-bottom: 17px; }
.body .charity { color: #808080; }

/* side apps */
.apps { width: 146px; display: flex; flex-direction: column; align-items: center; padding-top: 48px; gap: 96px; }
.apps hr { width: 51px; border: 0; border-top: 2px solid #dadce0; margin: -6px 0 0; height: 2px; }
.add { margin-top: 1px; }
.hide { margin-top: auto; margin-bottom: 58px; }

/* dock */
.dock { position: relative; width: 2771px; height: 124px; margin: 4px 0 0 85px; padding: 0 3px; border: 2px solid rgba(255,255,255,.18); border-radius: 38px; display: flex; align-items: center;
  background: linear-gradient(90deg, #5a656b 0, #596266 240px, #63757b 400px, #6f9b98 500px, #739e99 560px, #5f6a66 650px, #5a5a58 740px, #676e6c 880px, #719da8 1000px, #626c73 1130px, #585c5e 1230px, #5b5f5e 1320px, #6d7775 1400px, #98bfb4 1490px, #9edcc8 1560px, #7ed6b8 1640px, #64ab90 1740px, #5d9f82 1860px, #577a66 2070px, #585f5a 2320px, #575958 2420px, #555655 2770px);
  box-shadow: 0 -4px 70px 8px rgba(0,0,0,.2); }
.app { position: relative; width: 102.600px; height: 120px; flex: none; display: flex; align-items: center; justify-content: center; padding-bottom: 10px; }
.app > svg { width: 76px; height: 76px; filter: drop-shadow(0 2px 2px rgba(0,0,0,.3)); }
.app > .tall { width: 76px; height: 92px; }
.app > .big { width: 82px; height: 82px; }
.run::after { content: ""; position: absolute; left: 47px; bottom: 2px; width: 8px; height: 8px; border-radius: 50%; background: #000; }
.mint::after { background: #1d6350; }
.badge { position: absolute; right: 1px; top: 8px; width: 36px; height: 36px; line-height: 36px; border-radius: 50%; background: #e0483c; color: #fff; text-align: center; font-size: 23px; }
.sep { width: 2px; height: 92px; background: #2e3531; flex: none; margin: 0 22px; }
.sep ~ .sep { margin: 0 21.500px 0 24px; }
```
